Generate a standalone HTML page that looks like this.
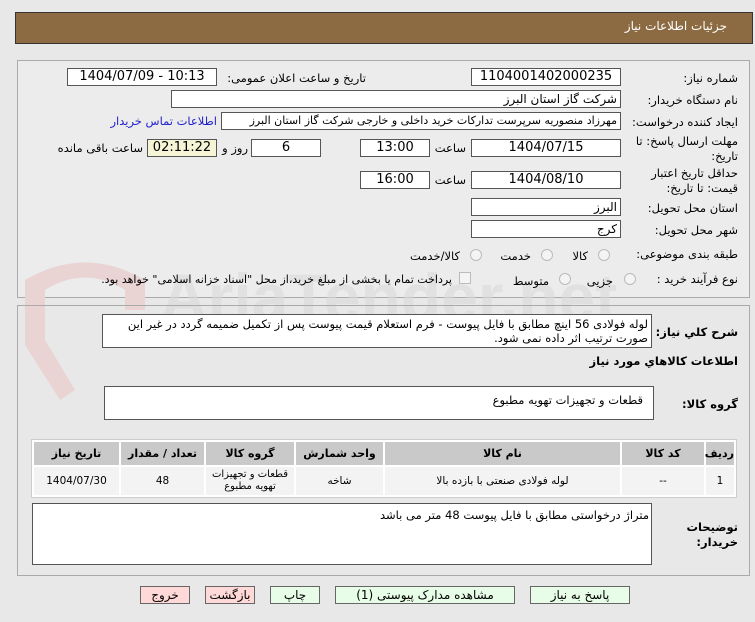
<!DOCTYPE html>
<html><head><meta charset="utf-8"><style>
*{box-sizing:border-box;margin:0;padding:0}
body{width:755px;height:622px;background:#e8e8e8;font-family:"DejaVu Sans","Liberation Sans",sans-serif;font-size:11.5px;color:#000;position:relative;overflow:hidden}
.a{position:absolute}
.t{position:absolute;white-space:nowrap;direction:rtl;line-height:15px}
.box{position:absolute;background:#fff;border:1px solid #555;text-align:center;line-height:16px;font-size:13px;overflow:hidden;white-space:nowrap}
.panel{position:absolute;left:17px;width:733px;border:1px solid #aaa;background:#ececec}
.b{font-weight:bold}
.rad{position:absolute;width:12px;height:12px;border-radius:50%;border:1px solid #bbb;background:#f4f4f4}
.btn{position:absolute;border:1px solid #666;text-align:center;line-height:16px;font-size:12px;direction:rtl}
table{border-collapse:separate;border-spacing:2px;position:absolute;left:31px;top:439px;width:706px;background:#fff;border:1px solid #ccc;table-layout:fixed}
th{background:#c9c9c9;height:23px;font-size:11px}
td{background:#f3f3f3;height:28px;text-align:center;font-size:10.5px;line-height:13px}
</style></head><body>
<div class="a" style="left:15px;top:12px;width:738px;height:32px;background:#8d6b42;border:1px solid #333"></div>
<div class="t" style="right:28px;top:19px;color:#fff;font-size:12px">جزئیات اطلاعات نیاز</div>

<div class="panel" style="top:60px;height:238px"></div>
<svg class="a" style="left:15px;top:250px" width="140" height="160" viewBox="0 0 140 160"><path d="M10 30 Q70 -5 130 30 L130 60 L110 60 L110 40 Q70 15 30 40 L30 90 L60 140 L45 150 L10 95 Z" fill="#e9d3d3"/></svg>
<div class="t" style="left:160px;top:262px;font-size:66px;line-height:70px;color:#dadada;direction:ltr;font-weight:bold;font-family:'Liberation Sans',sans-serif;opacity:.6">AriaTender.net</div>

<div class="t" style="right:17px;top:71px">شماره نیاز:</div>
<div class="box" style="left:471px;top:68px;width:150px;height:18px">1104001402000235</div>
<div class="t" style="right:389px;top:71px">تاریخ و ساعت اعلان عمومی:</div>
<div class="box" style="left:67px;top:68px;width:150px;height:18px">1404/07/09 - 10:13</div>

<div class="t" style="right:17px;top:93px">نام دستگاه خریدار:</div>
<div class="box" style="left:171px;top:90px;width:450px;height:18px;text-align:right;padding-right:3px;direction:rtl;font-size:12px">شرکت گاز استان البرز</div>

<div class="t" style="right:17px;top:115px">ایجاد کننده درخواست:</div>
<div class="box" style="left:221px;top:112px;width:400px;height:18px;text-align:right;padding-right:3px;direction:rtl;font-size:11px">مهرزاد منصوریه سرپرست تدارکات خرید داخلی و خارجی شرکت گاز استان البرز</div>
<div class="t" style="right:538px;top:114px;color:#2222cc">اطلاعات تماس خریدار</div>

<div class="t" style="right:17px;top:134px;text-align:right">مهلت ارسال پاسخ: تا<br>تاریخ:</div>
<div class="box" style="left:471px;top:139px;width:150px;height:18px">1404/07/15</div>
<div class="t" style="right:289px;top:141px">ساعت</div>
<div class="box" style="left:360px;top:139px;width:70px;height:18px">13:00</div>
<div class="box" style="left:251px;top:139px;width:70px;height:18px">6</div>
<div class="t" style="right:507px;top:141px">روز و</div>
<div class="box" style="left:147px;top:139px;width:70px;height:18px;background:#f5f5d5">02:11:22</div>
<div class="t" style="right:612px;top:141px">ساعت باقی مانده</div>

<div class="t" style="right:17px;top:166px;text-align:right">حداقل تاریخ اعتبار<br>قیمت: تا تاریخ:</div>
<div class="box" style="left:471px;top:171px;width:150px;height:18px">1404/08/10</div>
<div class="t" style="right:289px;top:173px">ساعت</div>
<div class="box" style="left:360px;top:171px;width:70px;height:18px">16:00</div>

<div class="t" style="right:17px;top:201px">استان محل تحویل:</div>
<div class="box" style="left:471px;top:198px;width:150px;height:18px;text-align:right;padding-right:3px;font-size:12px">البرز</div>
<div class="t" style="right:17px;top:223px">شهر محل تحویل:</div>
<div class="box" style="left:471px;top:220px;width:150px;height:18px;text-align:right;padding-right:3px;font-size:12px">کرج</div>

<div class="t" style="right:17px;top:247px">طبقه بندی موضوعی:</div>
<div class="rad" style="left:598px;top:249px"></div><div class="t" style="right:167px;top:249px">کالا</div>
<div class="rad" style="left:541px;top:249px"></div><div class="t" style="right:224px;top:249px">خدمت</div>
<div class="rad" style="left:470px;top:249px"></div><div class="t" style="right:295px;top:249px">کالا/خدمت</div>

<div class="t" style="right:17px;top:272px">نوع فرآیند خرید :</div>
<div class="rad" style="left:624px;top:273px"></div><div class="t" style="right:142px;top:274px">جزیی</div>
<div class="rad" style="left:559px;top:273px"></div><div class="t" style="right:206px;top:274px">متوسط</div>
<div class="a" style="left:459px;top:272px;width:12px;height:12px;border:1px solid #bbb;background:#f4f4f4"></div>
<div class="t" style="right:303px;top:272px;font-size:11px">پرداخت تمام یا بخشی از مبلغ خرید،از محل "اسناد خزانه اسلامی" خواهد بود.</div>

<div class="panel" style="top:305px;height:271px;background:transparent"></div>
<div class="t b" style="right:17px;top:325px">شرح کلي نیاز:</div>
<div class="box" style="left:102px;top:314px;width:550px;height:34px;text-align:right;direction:rtl;font-size:11.5px;padding:2px 3px;line-height:14px;white-space:normal">لوله فولادی 56 اینچ مطابق با فایل پیوست - فرم استعلام قیمت پیوست پس از تکمیل ضمیمه گردد در غیر این صورت ترتیب اثر داده نمی شود.</div>
<div class="t b" style="right:17px;top:354px">اطلاعات کالاهاي مورد نیاز</div>
<div class="t b" style="right:17px;top:397px">گروه کالا:</div>
<div class="box" style="left:104px;top:386px;width:550px;height:34px;text-align:right;direction:rtl;font-size:11.5px;padding:5px 10px">قطعات و تجهیزات تهویه مطبوع</div>

<table dir="rtl"><tr><th style="width:28px">ردیف</th><th style="width:82px">کد کالا</th><th style="width:235px">نام کالا</th><th style="width:87px">واحد شمارش</th><th style="width:88px">گروه کالا</th><th style="width:83px">تعداد / مقدار</th><th>تاریخ نیاز</th></tr>
<tr><td>1</td><td>--</td><td>لوله فولادی صنعتی با بازده بالا</td><td>شاخه</td><td style="font-size:10px;line-height:12px">قطعات و تجهیزات<br>تهویه مطبوع</td><td>48</td><td>1404/07/30</td></tr></table>

<div class="t b" style="right:17px;top:520px;text-align:right">توضیحات<br>خریدار:</div>
<div class="box" style="left:32px;top:503px;width:620px;height:62px;text-align:right;direction:rtl;font-size:11.5px;padding:3px 2px">متراژ درخواستی مطابق با فایل پیوست 48 متر می باشد</div>

<div class="btn" style="left:530px;top:586px;width:100px;height:18px;background:#e8fde8">پاسخ به نیاز</div>
<div class="btn" style="left:335px;top:586px;width:180px;height:18px;background:#e8fde8">مشاهده مدارک پیوستی (1)</div>
<div class="btn" style="left:270px;top:586px;width:50px;height:18px;background:#e8fde8">چاپ</div>
<div class="btn" style="left:205px;top:586px;width:50px;height:18px;background:#ffd8d8">بازگشت</div>
<div class="btn" style="left:140px;top:586px;width:50px;height:18px;background:#ffd8d8">خروج</div>
</body></html>
